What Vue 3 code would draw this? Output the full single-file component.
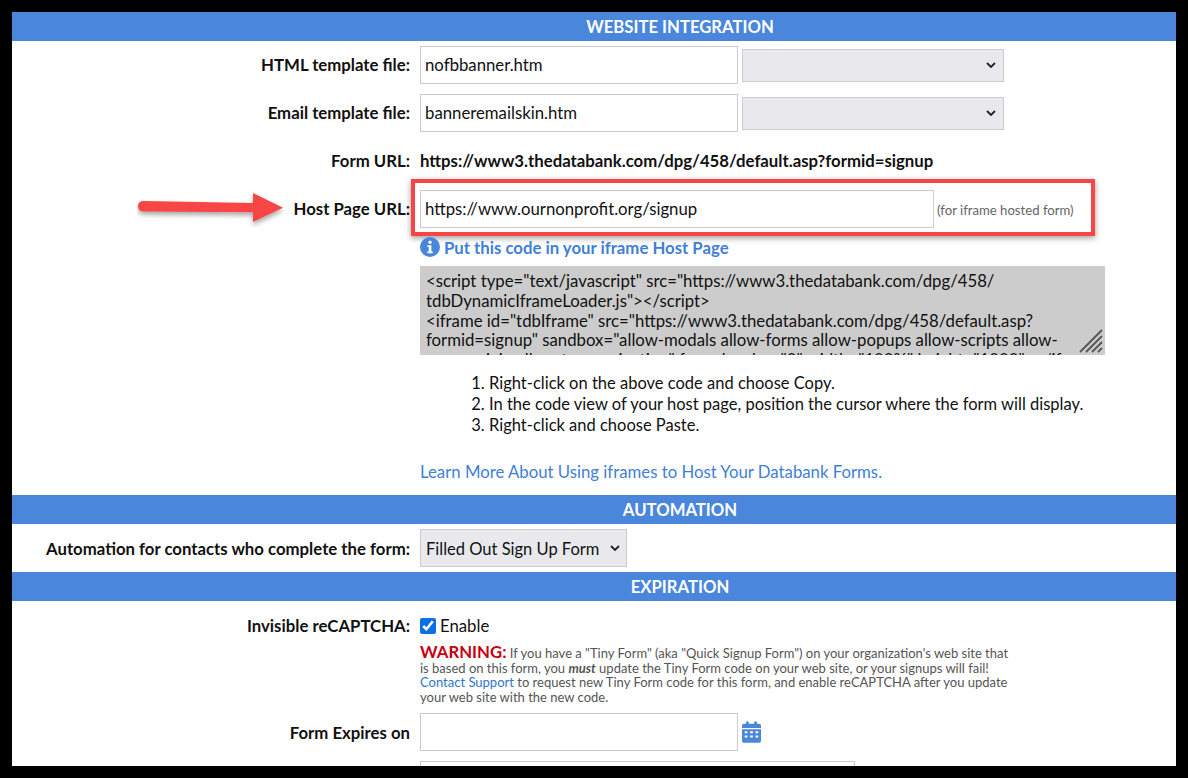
<script setup>
const code = `<script type="text/javascript" src="https://www3.thedatabank.com/dpg/458/
tdbDynamicIframeLoader.js"></` + `script>
<iframe id="tdbIframe" src="https://www3.thedatabank.com/dpg/458/default.asp?
formid=signup" sandbox="allow-modals allow-forms allow-popups allow-scripts allow-
same-origin allow-top-navigation" frameborder="0" width="100%" height="1000"></` + `iframe>`
</script>

<template>
  <div class="frame">
    <main class="panel">
      <h2 class="bar">WEBSITE INTEGRATION</h2>

      <div class="row row-file">
        <label class="label">HTML template file:</label>
        <div class="field">
          <input class="text file" type="text" value="nofbbanner.htm" />
          <span class="select-wrap wide">
            <select class="select"><option></option></select>
            <svg class="chev" viewBox="0 0 10 6"><path d="M1 1l4 4 4-4" /></svg>
          </span>
        </div>
      </div>

      <div class="row row-file second">
        <label class="label">Email template file:</label>
        <div class="field">
          <input class="text file" type="text" value="banneremailskin.htm" />
          <span class="select-wrap wide">
            <select class="select"><option></option></select>
            <svg class="chev" viewBox="0 0 10 6"><path d="M1 1l4 4 4-4" /></svg>
          </span>
        </div>
      </div>

      <div class="row url-row">
        <label class="label">Form URL:</label>
        <strong class="url">https://www3.thedatabank.com/dpg/458/default.asp?formid=signup</strong>
      </div>

      <div class="row host-row">
        <svg class="arrow" viewBox="0 0 150 44">
          <defs>
            <filter id="arrowShadow" x="-10%" y="-20%" width="120%" height="150%">
              <feDropShadow dx="0" dy="3" stdDeviation="2.5" flood-color="#000" flood-opacity="0.35" />
            </filter>
          </defs>
          <path filter="url(#arrowShadow)" fill="#f84444" d="M6 13 L116 15 L116 5 L146 19.7 L116 34 L116 24.3 L6 23.5 Q1 23 1 18 Q1 13.5 6 13 Z" />
        </svg>
        <label class="label">Host Page URL:</label>
        <div class="field">
          <input class="text host" type="text" value="https://www.ournonprofit.org/signup" />
          <small class="hint">(for iframe hosted form)</small>
        </div>
        <div class="highlight"></div>
      </div>

      <div class="row info-row">
        <span></span>
        <a class="info">
          <svg class="info-icon" viewBox="0 0 20 20">
            <circle cx="10" cy="10" r="10" fill="#4a86da" />
            <circle cx="10" cy="5.2" r="1.7" fill="#fff" />
            <path fill="#fff" d="M7.4 8.2h4v6.2h1.3v1.9H7.3v-1.9h1.4v-4.3H7.4z" />
          </svg>
          Put this code in your iframe Host Page
        </a>
      </div>

      <div class="row code-row">
        <span></span>
        <div class="code-wrap">
          <textarea class="code" readonly :value="code"></textarea>
          <svg class="grip" viewBox="0 0 24 24">
            <path d="M1 23L23 1M7 23L23 7M13 23L23 13M19 23L23 19" />
          </svg>
        </div>
      </div>

      <div class="row">
        <span></span>
        <ol class="steps">
          <li>Right-click on the above code and choose Copy.</li>
          <li>In the code view of your host page, position the cursor where the form will display.</li>
          <li>Right-click and choose Paste.</li>
        </ol>
      </div>

      <div class="row learn-row">
        <span></span>
        <a class="learn">Learn More About Using iframes to Host Your Databank Forms.</a>
      </div>

      <h2 class="bar">AUTOMATION</h2>

      <div class="row auto-row">
        <label class="label">Automation for contacts who complete the form:</label>
        <span class="select-wrap auto">
          <select class="select"><option>Filled Out Sign Up Form</option></select>
          <svg class="chev" viewBox="0 0 10 6"><path d="M1 1l4 4 4-4" /></svg>
        </span>
      </div>

      <h2 class="bar">EXPIRATION</h2>

      <div class="row captcha-row">
        <label class="label">Invisible reCAPTCHA:</label>
        <label class="check"><input type="checkbox" checked /> Enable</label>
      </div>

      <div class="row warn-row">
        <span></span>
        <p class="warn">
          <b>WARNING:</b> If you have a "Tiny Form" (aka "Quick Signup Form") on your organization's web site that<br />
          is based on this form, you <em>must</em> update the Tiny Form code on your web site, or your signups will fail!<br />
          <a>Contact Support</a> to request new Tiny Form code for this form, and enable reCAPTCHA after you update<br />
          your web site with the new code.
        </p>
      </div>

      <div class="row expire-row">
        <label class="label">Form Expires on</label>
        <div class="field">
          <input class="text file" type="text" />
          <svg class="cal" viewBox="0 0 448 512">
            <path fill="#4a86da" d="M96 32c0-18 14-32 32-32s32 14 32 32v32h128V32c0-18 14-32 32-32s32 14 32 32v32h48c27 0 48 21 48 48v48H0v-48c0-27 21-48 48-48h48V32zM0 192h448v272c0 27-21 48-48 48H48c-27 0-48-21-48-48V192zm64 48v48h64v-48H64zm128 0v48h64v-48h-64zm128 0v48h64v-48h-64zM64 336v48h64v-48H64zm128 0v48h64v-48h-64zm128 0v48h64v-48h-64z" />
          </svg>
        </div>
      </div>

      <div class="row last-row">
        <span></span>
        <input class="text last" type="text" />
      </div>
    </main>
  </div>
</template>

<style>
html, body { margin: 0; background: #000; overflow: hidden; }
</style>

<style scoped>
.frame {
  box-sizing: border-box;
  width: 1188px;
  height: 778px;
  padding: 12px;
  background: #000;
  font-family: Lato, sans-serif;
  font-size: 16.75px;
  color: #111;
}
.panel {
  height: 754px;
  overflow: hidden;
  background: #fff;
}
.bar {
  box-sizing: border-box;
  margin: 0;
  height: 29px;
  padding: 1px 0 0 172px;
  background: #4a86dc;
  color: #fff;
  font-size: 16.7px;
  font-weight: 700;
  line-height: 29px;
  text-align: center;
}
.row {
  display: grid;
  grid-template-columns: 398px 1fr;
  column-gap: 10px;
  align-items: center;
  position: relative;
}
.label {
  padding-bottom: 2px;
  font-weight: 700;
  text-align: right;
  color: #111;
}
.auto-row .label,
.expire-row .label { padding-bottom: 0; }
.field {
  display: flex;
  align-items: center;
  gap: 4px;
}
.text {
  box-sizing: border-box;
  height: 38px;
  padding: 0 4px 2px;
  border: 1px solid #ccc;
  background: #fff;
  font: 16.75px Lato, sans-serif;
  color: #111;
  outline: none;
}
.file { width: 318px; }
.host { width: 514px; }
.last { width: 435px; }
.select-wrap {
  position: relative;
  display: inline-block;
}
.select {
  box-sizing: border-box;
  display: block;
  width: 100%;
  height: 100%;
  padding: 1px 5px 0;
  border: 1px solid #ccc;
  border-radius: 0;
  background: #e9e9ed;
  font: 16.5px Lato, sans-serif;
  color: #111;
  appearance: none;
  outline: none;
}
.wide { width: 262px; height: 33px; }
.auto { width: 207px; height: 38px; }
.chev {
  position: absolute;
  right: 8px;
  top: 50%;
  width: 10px;
  height: 6px;
  margin-top: -3px;
  fill: none;
  stroke: #222;
  stroke-width: 1.8;
  pointer-events: none;
}
.auto .chev { right: 7px; }
.row-file { margin-top: 5px; }
.second { margin-top: 10px; }
.url-row { margin-top: 18px; height: 20px; }
.url { padding-bottom: 2px; font-weight: 700; white-space: nowrap; }
.host-row { margin-top: 20px; }
.hint { margin: 2px 0 0 -1px; font-size: 13.15px; color: #666; white-space: nowrap; }
.arrow {
  position: absolute;
  left: 125px;
  top: -2px;
  width: 150px;
  height: 44px;
}
.highlight {
  position: absolute;
  left: 399px;
  top: -11px;
  width: 684px;
  height: 57px;
  box-sizing: border-box;
  border: 4px solid #f84444;
  box-shadow: 0 2px 6px rgba(0, 0, 0, 0.4);
  pointer-events: none;
}
.info-row { margin-top: 7px; }
.info {
  display: flex;
  align-items: center;
  gap: 4px;
  color: #3f7fd9;
  font-weight: 700;
  height: 24px;
}
.info-icon { width: 20px; height: 20px; }
.code-row { margin-top: 7px; }
.code-wrap {
  position: relative;
  width: 685px;
  height: 89px;
}
.code {
  box-sizing: border-box;
  display: block;
  width: 100%;
  height: 100%;
  padding: 5px 6px 0;
  border: 0;
  background: #ccc;
  color: #111;
  font: 16.75px/19.75px Lato, sans-serif;
  white-space: pre;
  resize: none;
  overflow: hidden;
  outline: none;
}
.grip {
  position: absolute;
  right: 2px;
  bottom: 2px;
  width: 24px;
  height: 24px;
  fill: none;
  stroke: #555;
  stroke-width: 1.8;
  pointer-events: none;
}
.steps {
  margin: 18px 0 0;
  padding-left: 69px;
  line-height: 21px;
  font-size: 16.5px;
}
.learn-row { margin-top: 25px; }
.learn { color: #3f7fd9; line-height: 22px; }
.learn-row + .bar { margin-top: 12px; }
.auto-row { margin: 5px 0; }
.captcha-row { margin-top: 14px; height: 20px; }
.check {
  display: flex;
  align-items: center;
  gap: 4px;
  padding-bottom: 2px;
}
.check input {
  width: 16px;
  height: 16px;
  margin: 0;
  accent-color: #0b6fe8;
}
.warn-row { margin-top: 11px; align-items: start; }
.warn {
  margin: 0;
  width: 640px;
  color: #555;
  font-size: 13px;
  line-height: 14.5px;
}
.warn b {
  color: #c8000f;
  font-size: 16.75px;
  line-height: 0;
}
.warn em { font-weight: 700; }
.warn a { color: #2f74d0; }
.expire-row { margin-top: 9px; }
.cal { width: 19px; height: 22px; }
.last-row { margin-top: 10px; }
</style>
